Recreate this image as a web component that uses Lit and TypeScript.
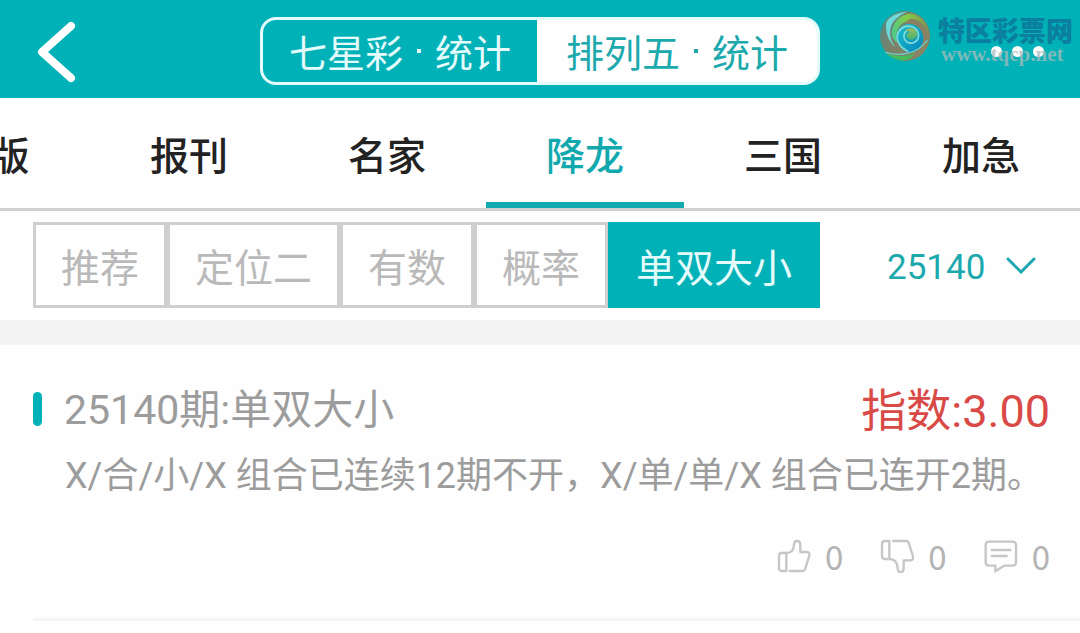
import { LitElement, html, css, svg } from "lit";
import { customElement, property, state } from "lit/decorators.js";

const thumbUp = svg`
  <path d="M28 42H13Q6 42 6 50V88Q6 96 14 96H28Z" />
  <path d="M28 42C42 42 50 32 51 18C51 2 70 2 70 18V39H90Q99 40 97 50L84 91Q82 96 76 96H38" />`;

const thumbDown = svg`
  <path d="M28 6H14Q6 6 6 14V52Q6 60 14 60H28Z" />
  <path d="M39 6H78Q84 6 86 11L99 52Q101 63 92 64H71V88C71 104 53 104 53 88C52 72 44 60 28 60" />`;

const comment = svg`
  <path d="M16 8H84Q96 8 96 18V70Q96 80 84 80H60L34 97V80H16Q5 80 5 70V18Q5 8 16 8Z" />
  <path d="M23 33H79M23 51H68" />`;

@customElement("site-watermark")
class SiteWatermark extends LitElement {
  static styles = css`
    :host {
      display: flex;
      align-items: flex-start;
      gap: 7px;
      pointer-events: none;
    }
    .mark {
      width: 52px;
      height: 52px;
    }
    .words {
      display: flex;
      flex-direction: column;
      padding-top: 5px;
    }
    .name {
      font: 900 27px/30px "Noto Sans CJK SC", sans-serif;
      color: #0a7f9f;
    }
    .site {
      padding-left: 3px;
      font: 700 21px/18px "Liberation Serif", serif;
      color: #a8bcbc;
      opacity: 0.75;
    }
  `;

  render() {
    return html`
      <svg class="mark" viewBox="0 0 156 156" aria-hidden="true">
        <defs>
          <linearGradient id="rim" x1="0" y1="0" x2="1" y2="0.6">
            <stop offset="0" stop-color="#4b8c88" />
            <stop offset="0.5" stop-color="#7d8069" />
            <stop offset="1" stop-color="#8b8464" />
          </linearGradient>
          <linearGradient id="leaf" x1="0" y1="0.6" x2="1" y2="0.4">
            <stop offset="0" stop-color="#4cc98a" />
            <stop offset="0.5" stop-color="#86cc44" />
            <stop offset="1" stop-color="#7b9656" />
          </linearGradient>
          <linearGradient id="sea" x1="0" y1="0" x2="1" y2="1">
            <stop offset="0" stop-color="#18c0cc" />
            <stop offset="1" stop-color="#0685bd" />
          </linearGradient>
          <linearGradient id="core" x1="0" y1="0" x2="0" y2="1">
            <stop offset="0" stop-color="#a0bb58" />
            <stop offset="1" stop-color="#3fb377" />
          </linearGradient>
        </defs>
        <circle cx="78" cy="78" r="75" fill="url(#rim)" />
        <path fill="#6fd8d8" d="M22 36C34 18 52 8 84 5C64 14 48 26 38 44C28 68 34 92 50 112C28 94 18 66 22 36Z" />
        <path fill="url(#leaf)" d="M38 66C42 34 66 10 98 11C128 16 144 40 148 72C136 48 114 34 92 34C62 36 46 60 54 98C42 90 38 78 38 66Z" />
        <path fill="#8a8062" d="M96 26C124 28 142 48 146 76C146 98 136 114 122 124C138 100 136 66 112 48C102 40 90 38 78 40C82 34 88 28 96 26Z" />
        <path fill="url(#sea)" d="M54 66C64 42 96 34 118 52C140 72 138 106 110 124C96 130 80 126 70 118C56 104 48 84 54 66Z" />
        <path fill="none" stroke="#84dcd8" stroke-width="5" stroke-linecap="round" d="M86 124C54 108 46 78 64 58C82 42 110 46 118 70C122 92 102 106 84 96C70 86 72 66 90 58" />
        <path fill="url(#core)" d="M76 66C84 48 112 52 114 72C114 90 92 96 84 82C80 74 86 66 94 68C90 62 82 60 76 66Z" />
        <path fill="#43bd5c" d="M20 130C46 140 84 142 106 130C100 144 84 152 64 151C46 148 30 140 20 130Z" />
        <path fill="none" stroke="#66d0c8" stroke-width="4" stroke-linecap="round" d="M20 127C62 140 116 132 144 92" />
      </svg>
      <div class="words">
        <span class="name">特区彩票网</span>
        <span class="site">www.tqcp.net</span>
      </div>
    `;
  }
}

@customElement("reaction-button")
class ReactionButton extends LitElement {
  @property() label = "";
  @property({ type: Number }) count = 0;
  @property({ attribute: false }) icon: unknown = null;

  static styles = css`
    button {
      display: flex;
      align-items: center;
      gap: 14px;
      padding: 0;
      border: 0;
      background: none;
      color: #b4b4b4;
      font: 400 33px/34px "Noto Sans CJK SC", sans-serif;
      cursor: pointer;
    }
    svg {
      width: 34px;
      height: 34px;
      fill: none;
      stroke: #c6c6c6;
      stroke-width: 7;
      stroke-linejoin: round;
      stroke-linecap: round;
    }
  `;

  render() {
    return html`
      <button aria-label="${this.label} ${this.count}">
        <svg viewBox="0 0 102 102" aria-hidden="true">${this.icon}</svg>
        <span>${this.count}</span>
      </button>
    `;
  }
}

@customElement("app-root")
class AppRoot extends LitElement {
  @state() private game = 0;
  @state() private tab = "降龙";
  @state() private filter = "单双大小";

  private games = [
    ["七星彩", "统计"],
    ["排列五", "统计"],
  ];
  private tabs = ["版", "报刊", "名家", "降龙", "三国", "加急"];
  private filters = ["推荐", "定位二", "有数", "概率", "单双大小"];

  static styles = css`
    :host {
      display: block;
      min-height: 100vh;
      background: #fefefe;
      font-family: "Noto Sans CJK SC", sans-serif;
      overflow-x: hidden;
    }
    button,
    select {
      margin: 0;
      padding: 0;
      border: 0;
      background: none;
      font-family: inherit;
      cursor: pointer;
    }
    .header {
      position: relative;
      display: grid;
      grid-template-columns: 1fr auto 1fr;
      align-items: center;
      height: 98px;
      padding: 0 34px;
      box-sizing: border-box;
      background: #00b1b7;
    }
    .back {
      justify-self: start;
      display: flex;
      padding-top: 5px;
    }
    .back svg {
      width: 42px;
      height: 62px;
    }
    .switch {
      display: flex;
      box-sizing: border-box;
      height: 68px;
      margin-top: 4px;
      border: 3px solid #e4fbfb;
      border-radius: 16px;
      overflow: hidden;
      background: #fefefe;
    }
    .game {
      display: flex;
      align-items: center;
      padding: 0 29px;
      font-size: 38px;
      line-height: 56px;
      color: #1ba9ad;
    }
    .game.on {
      padding: 0 26px;
      background: #00b1b7;
      color: #e4fbfb;
    }
    .dot {
      width: 4px;
      height: 4px;
      margin: 0 14px;
      background: currentColor;
    }
    .more {
      justify-self: end;
      display: flex;
      gap: 10px;
      padding: 4px 2px 0 0;
    }
    .more i {
      width: 11px;
      height: 11px;
      border-radius: 50%;
      background: #fefefe;
    }
    .watermark {
      position: absolute;
      top: 10px;
      right: 7px;
    }
    .tabs {
      display: flex;
      justify-content: flex-end;
      border-bottom: 3px solid #d0d0d0;
      overflow: hidden;
    }
    .tab {
      flex: 0 0 18.333%;
      box-sizing: border-box;
      height: 110px;
      padding-top: 6px;
      border-bottom: 6px solid transparent;
      font-size: 39px;
      line-height: 56px;
      font-weight: 500;
      color: #222;
    }
    .tab:first-child {
      padding-left: 38px;
    }
    .tab.on {
      border-bottom-color: #12a9ae;
      color: #12a9ae;
    }
    .filters {
      display: flex;
      align-items: center;
      justify-content: space-between;
      padding: 11px 44px 12px 33px;
    }
    .pills {
      display: flex;
    }
    .pill {
      box-sizing: border-box;
      height: 86px;
      padding: 0 25px;
      border: 3px solid #cfcfcf;
      font-size: 39px;
      line-height: 56px;
      color: #b9b9b9;
      white-space: nowrap;
    }
    .pill.on {
      border-color: #00b1b7;
      background: #00b1b7;
      color: #e4fbfb;
    }
    .issue {
      display: flex;
      align-items: center;
      gap: 20px;
      color: #1ba9ad;
    }
    .issue select {
      appearance: none;
      padding-top: 5px;
      color: inherit;
      font-family: Roboto, sans-serif;
      font-size: 35px;
      line-height: 56px;
      font-weight: 400;
    }
    .issue svg {
      width: 30px;
      height: 18px;
    }
    .band {
      height: 25px;
      background: #f4f4f4;
    }
    .card {
      margin-left: 33px;
      border-bottom: 3px solid #f5f5f5;
      padding: 34px 30px 45px 0;
      font-family: Roboto, "Noto Sans CJK SC", sans-serif;
    }
    .top {
      display: flex;
      align-items: center;
      height: 60px;
    }
    .bar {
      width: 9px;
      height: 34px;
      border-radius: 5px;
      background: #00b1b7;
    }
    .title {
      flex: 1;
      margin: 0;
      padding: 2px 0 0 22px;
      font-size: 41px;
      line-height: 60px;
      font-weight: 400;
      color: #9c9c9c;
    }
    .score {
      padding-top: 6px;
      font-size: 45px;
      line-height: 60px;
      color: #d94a47;
    }
    .text {
      margin: 11px 0 0;
      padding-left: 32px;
      font-size: 36px;
      line-height: 52px;
      color: #9c9c9c;
      white-space: nowrap;
    }
    .actions {
      display: flex;
      justify-content: flex-end;
      gap: 37px;
      padding-top: 37px;
    }
  `;

  render() {
    return html`
      <header class="header">
        <button class="back" aria-label="返回">
          <svg viewBox="0 0 42 62" fill="none" stroke="#fefefe" stroke-width="8" stroke-linecap="round" stroke-linejoin="round" aria-hidden="true">
            <path d="M37 5L8 31L37 57" />
          </svg>
        </button>
        <div class="switch">
          ${this.games.map(
            ([name, kind], i) => html`
              <button class="game ${i === this.game ? "on" : ""}" @click=${() => (this.game = i)}>
                ${name}<span class="dot"></span>${kind}
              </button>
            `
          )}
        </div>
        <button class="more" aria-label="更多"><i></i><i></i><i></i></button>
        <site-watermark class="watermark"></site-watermark>
      </header>

      <nav class="tabs">
        ${this.tabs.map(
          (t) => html`<button class="tab ${t === this.tab ? "on" : ""}" @click=${() => (this.tab = t)}>${t}</button>`
        )}
      </nav>

      <div class="filters">
        <div class="pills">
          ${this.filters.map(
            (f) => html`<button class="pill ${f === this.filter ? "on" : ""}" @click=${() => (this.filter = f)}>${f}</button>`
          )}
        </div>
        <label class="issue">
          <select aria-label="期号">
            <option>25140</option>
          </select>
          <svg viewBox="0 0 30 18" fill="none" stroke="currentColor" stroke-width="3" stroke-linecap="round" aria-hidden="true">
            <path d="M2 3L15 16L28 3" />
          </svg>
        </label>
      </div>

      <div class="band"></div>

      <article class="card">
        <div class="top">
          <span class="bar"></span>
          <h2 class="title">25140期:单双大小</h2>
          <span class="score">指数:3.00</span>
        </div>
        <p class="text">X/合/小/X 组合已连续12期不开，X/单/单/X 组合已连开2期。</p>
        <div class="actions">
          <reaction-button label="赞" .icon=${thumbUp}></reaction-button>
          <reaction-button label="踩" .icon=${thumbDown}></reaction-button>
          <reaction-button label="评论" .icon=${comment}></reaction-button>
        </div>
      </article>
    `;
  }
}
